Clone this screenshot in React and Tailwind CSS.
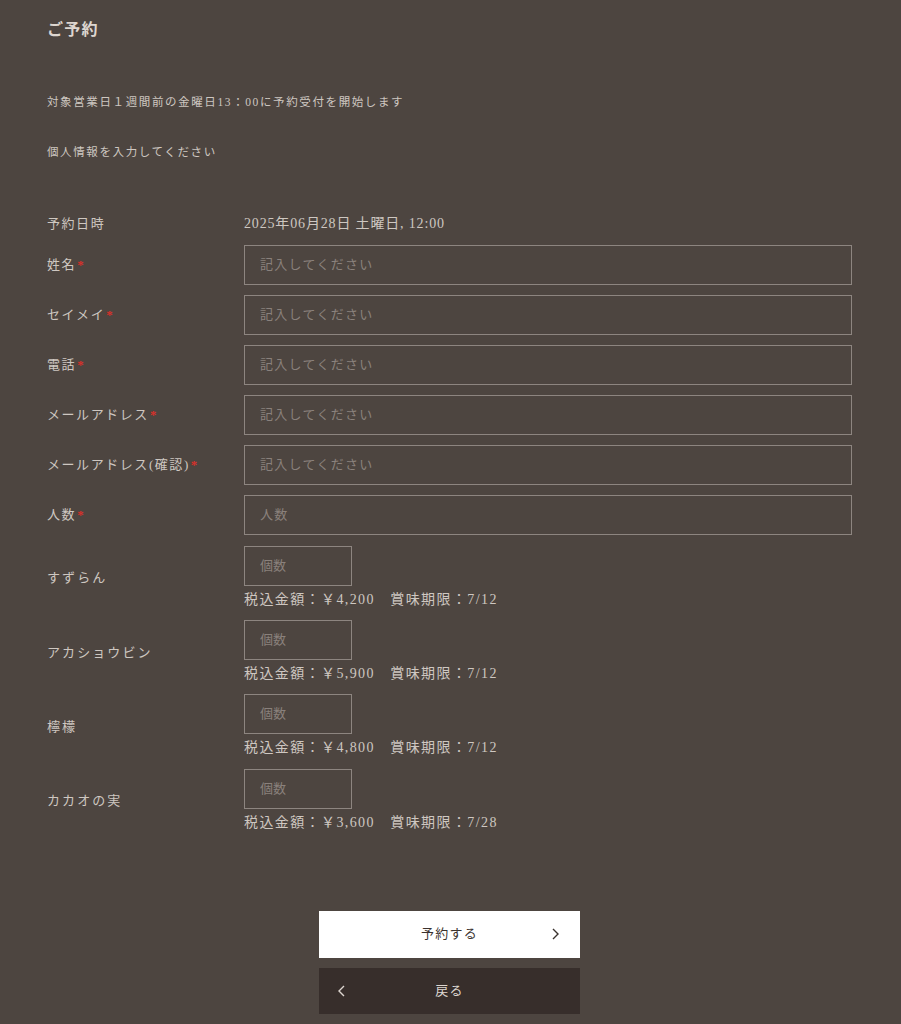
const font = { fontFamily: '"Liberation Serif", "Noto Sans CJK JP", serif' };

const fields = [
  { label: "姓名", placeholder: "記入してください" },
  { label: "セイメイ", placeholder: "記入してください" },
  { label: "電話", placeholder: "記入してください" },
  { label: "メールアドレス", placeholder: "記入してください" },
  { label: "メールアドレス(確認)", placeholder: "記入してください" },
  { label: "人数", placeholder: "人数" },
];

const products = [
  { name: "すずらん", price: "4,200", limit: "7/12" },
  { name: "アカショウビン", price: "5,900", limit: "7/12" },
  { name: "檸檬", price: "4,800", limit: "7/12" },
  { name: "カカオの実", price: "3,600", limit: "7/28" },
];

export default function App() {
  return (
    <div className="min-h-screen bg-[#4d4540] text-[#cec7c1]" style={font}>
      <div className="pl-[47px] pr-[49px] pt-[18px] pb-[10px]">
        <h1 className="text-[16px] font-bold tracking-[0.08em] text-[#ddd6d0]">ご予約</h1>

        <p className="mt-[52px] text-[11.5px] tracking-[0.14em]">
          対象営業日１週間前の金曜日13：00に予約受付を開始します
        </p>
        <p className="mt-[33px] text-[11.5px] tracking-[0.14em]">個人情報を入力してください</p>

        <div className="mt-[51px] flex items-center h-[22px]">
          <div className="w-[197px] text-[13px] tracking-[0.12em]">予約日時</div>
          <div className="text-[14px] tracking-[0.06em]">2025年06月28日 土曜日, 12:00</div>
        </div>

        <div className="mt-[10px] flex flex-col gap-[10px]">
          {fields.map((f) => (
            <div key={f.label} className="flex items-center">
              <div className="w-[197px] text-[13px] tracking-[0.12em]">
                {f.label}
                <span className="text-[#d8302a] text-[13px] font-bold ml-[1px]">*</span>
              </div>
              <input
                placeholder={f.placeholder}
                className="flex-1 h-[40px] border border-[#8d8580] bg-transparent px-[15px] text-[13px] tracking-[0.1em] placeholder:text-[#8a817c] outline-none"
                style={font}
              />
            </div>
          ))}
        </div>

        <div className="mt-[11px] flex flex-col gap-[10.4px]">
          {products.map((p) => (
            <div key={p.name} className="flex items-center">
              <div className="w-[197px] text-[13px] tracking-[0.16em] pt-[1px]">{p.name}</div>
              <div className="flex flex-col">
                <input
                  placeholder="個数"
                  className="w-[108px] h-[40px] border border-[#8d8580] bg-transparent px-[15px] text-[13px] placeholder:text-[#8a817c] outline-none"
                  style={font}
                />
                <div className="mt-[4px] text-[14px] tracking-[0.1em] leading-[20px]">
                  税込金額：￥{p.price}　賞味期限：{p.limit}
                </div>
              </div>
            </div>
          ))}
        </div>

        <div className="mt-[78px] flex flex-col items-center gap-[10px]">
          <button className="relative w-[261px] h-[47px] bg-white text-[#3a322e] text-[13px] tracking-[0.1em] flex items-center justify-center">
            予約する
            <svg className="absolute right-[20px]" width="10" height="14" viewBox="0 0 10 14" fill="none" stroke="#3a322e" strokeWidth="1.4">
              <path d="M3 2l5 5-5 5" />
            </svg>
          </button>
          <button className="relative w-[261px] h-[46px] bg-[#372e2b] text-[#ddd6d0] text-[13px] tracking-[0.1em] flex items-center justify-center">
            <svg className="absolute left-[18px]" width="10" height="14" viewBox="0 0 10 14" fill="none" stroke="#ddd6d0" strokeWidth="1.4">
              <path d="M7 2L2 7l5 5" />
            </svg>
            戻る
          </button>
        </div>
      </div>
    </div>
  );
}
